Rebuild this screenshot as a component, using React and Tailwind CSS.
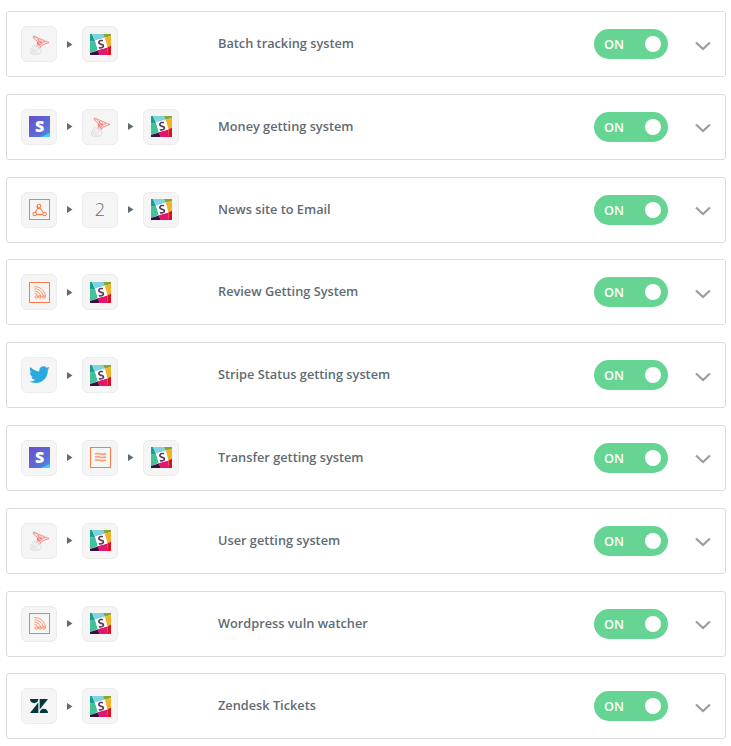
const SlackIcon = () => (
  <svg width="21" height="21" viewBox="0 0 21 21" className="blur-[0.2px]">
    <rect width="21" height="21" fill="#fff" />
    <path d="M0 0h2l3 7-5 .500z" fill="#1a9e8f" />
    <path d="M2 0h11l1.700 3.700L5 6.500z" fill="#80d4e2" />
    <path d="M13 0h8v2l-6.300 1.700z" fill="#8aa62c" />
    <path d="M14.700 3.700L21 2v9.500l-3.700 2z" fill="#efb42c" />
    <path d="M0 7.500L5 6.500l3 9.500-8 3z" fill="#43c29a" />
    <path d="M7.700 16l9.600-2.500L18 21H9.500z" fill="#e3166d" />
    <path d="M17.300 13.500l3.700-2V21h-3z" fill="#e0111f" />
    <path d="M0 19l7.900-2.500L9.500 21H0z" fill="#3b0f3f" />
    <path d="M5 6.500l9.700-2.800 2.600 9.800L7.700 16z" fill="#fff" />
    <text x="11" y="14.400" textAnchor="middle" transform="rotate(-10 11 10.500)" className="font-['Open_Sans',sans-serif] text-[12px] font-bold" fill="#5a3a5f">S</text>
  </svg>
);

const SqlIcon = () => (
  <svg width="21" height="21" viewBox="0 0 21 21" fill="none" className="blur-[0.2px]">
    <path d="M4 2.500c1.500-1 3-.5 4 1" fill="#eeeeee" stroke="#d9b5b2" strokeWidth=".7" />
    <path d="M8 3.500L20 8.500l-7 2.500-2.500 3.500-3-2c1.500-2 1.500-4 0-6C6 6 4.500 4.500 4 2.500z" fill="#fde4e1" stroke="#ef5b50" strokeWidth=".6" />
    <path d="M8 4.500l5 5.500M10 5l-2 5M13 6.500l-4 3M16 7.500l-5 1.500M9 8l2.500 5M12 10l-3 1" stroke="#ef5b50" strokeWidth=".6" />
    <path d="M4.500 11.500c2 .5 5.500 1.500 7 3.500 1.500 2.500 0 4.500-2 5-2.500.7-6 .5-7.500-.5-1.500-2 .5-6 2.500-8z" fill="#f2f2f2" stroke="#cfcfcf" strokeWidth=".6" />
    <path d="M2.500 15l6 4.500M5 13l-2.500 7M9 14l-4 6M2 18l8-3" stroke="#dcdcdc" strokeWidth=".5" />
  </svg>
);

const StripeIcon = () => (
  <svg width="21" height="21" viewBox="0 0 21 21">
    <defs>
      <linearGradient id="stripe-bg" x1="0" y1="0" x2="1" y2="1">
        <stop offset="0" stopColor="#6a4fc8" />
        <stop offset=".7" stopColor="#5b6fd8" />
        <stop offset="1" stopColor="#3fa4e8" />
      </linearGradient>
    </defs>
    <rect width="21" height="21" fill="url(#stripe-bg)" />
    <path d="M12 21L21 17v4z" fill="#3fd0f5" />
    <text x="10.500" y="15.800" textAnchor="middle" className="font-['Open_Sans',sans-serif] text-[16px] font-extrabold" fill="#fff">S</text>
  </svg>
);

const WebhookIcon = () => (
  <svg width="21" height="21" viewBox="0 0 21 21" fill="none" stroke="#ff7a45">
    <rect x=".5" y=".5" width="20" height="20" strokeWidth="1" />
    <g strokeWidth="1.100">
      <circle cx="10" cy="7" r="1.800" />
      <circle cx="5.800" cy="15" r="1.800" />
      <circle cx="15.500" cy="15" r="1.800" />
      <path d="M9 9l-3 4.500M8 15.500h5.500M11 9l3 4.500M8.500 6l-.5 3M8.500 9.500h3" />
    </g>
  </svg>
);

const RssIcon = () => (
  <svg width="21" height="21" viewBox="0 0 21 21" fill="none" stroke="#ff8a5c">
    <rect x=".5" y=".5" width="20" height="20" strokeWidth="1" stroke="#ff7a45" />
    <g strokeWidth=".9">
      <path d="M5.500 4.500c6 0 11 5 11 10.500" />
      <path d="M5.500 6.800c4.700 0 8.700 3.800 8.700 8.200" />
      <path d="M5.500 9.200c3.400 0 6.300 2.600 6.300 5.800" />
      <path d="M5.500 11.500c2 0 3.900 1.500 3.900 3.500" />
      <circle cx="7.300" cy="15" r="1.300" />
      <circle cx="11" cy="15" r="1.300" />
      <circle cx="14.800" cy="15" r="1.300" />
    </g>
  </svg>
);

const TransferIcon = () => (
  <svg width="21" height="21" viewBox="0 0 21 21" fill="none" stroke="#ff7a45">
    <rect x=".5" y=".5" width="20" height="20" strokeWidth="1" />
    <g strokeWidth="1.600" stroke="#ff9a75">
      <path d="M5 7c2-1 3.500-.5 5.500 0s3.500.5 5.500-.5" />
      <path d="M5 10.200c2-1 3.500-.5 5.500 0s3.500.5 5.500-.5" />
      <path d="M5 13.400c2-1 3.500-.5 5.500 0s3.500.5 5.500-.5" />
    </g>
  </svg>
);

const TwitterIcon = () => (
  <svg width="21" height="18" viewBox="0 0 24 20" fill="#2aa9e0">
    <path d="M24 2.400c-.9.400-1.800.700-2.800.800 1-.6 1.800-1.600 2.200-2.700-1 .6-2 1-3.100 1.200C19.300.700 18 0 16.600 0c-2.700 0-4.900 2.200-4.900 4.900 0 .4 0 .8.100 1.100C7.700 5.800 4.100 3.800 1.700.9c-.4.700-.7 1.600-.7 2.500 0 1.700.9 3.200 2.200 4.100-.8 0-1.600-.2-2.200-.6v.1c0 2.400 1.700 4.400 3.900 4.800-.4.100-.8.200-1.300.2-.3 0-.6 0-.9-.1.600 2 2.400 3.400 4.600 3.400-1.700 1.300-3.800 2.100-6.100 2.100-.4 0-.8 0-1.200-.1C2.200 18.200 4.800 19 7.500 19c9.100 0 14-7.500 14-14v-.6c1-.7 1.800-1.500 2.500-2z" />
  </svg>
);

const ZendeskIcon = () => (
  <svg width="18" height="14" viewBox="0 0 18 14" fill="#03363d">
    <path d="M0 0h8.300c0 2.300-1.900 4.200-4.150 4.200S0 2.300 0 0z" />
    <path d="M8.300 3.400V14H0z" />
    <path d="M9.700 0v10.600L18 0z" />
    <path d="M9.700 14c0-2.300 1.900-4.200 4.150-4.200S18 11.700 18 14z" />
  </svg>
);

const IconBox = ({ children }) => (
  <div className="flex h-9 w-9 shrink-0 items-center justify-center rounded-md border border-[#ececec] bg-[#f5f5f5] text-[18px] font-light text-[#5f6b73]">
    {children}
  </div>
);

const Arrow = () => (
  <div className="flex w-[25px] shrink-0 items-center justify-center">
    <svg width="6" height="7" viewBox="0 0 6 7" fill="#5f6b73">
      <path d="M0 0l5.500 3.500L0 7z" />
    </svg>
  </div>
);

const zaps = [
  { name: "Batch tracking system", icons: [<SqlIcon />, <SlackIcon />] },
  { name: "Money getting system", icons: [<StripeIcon />, <SqlIcon />, <SlackIcon />] },
  { name: "News site to Email", icons: [<WebhookIcon />, "2", <SlackIcon />] },
  { name: "Review Getting System", icons: [<RssIcon />, <SlackIcon />] },
  { name: "Stripe Status getting system", icons: [<TwitterIcon />, <SlackIcon />] },
  { name: "Transfer getting system", icons: [<StripeIcon />, <TransferIcon />, <SlackIcon />] },
  { name: "User getting system", icons: [<SqlIcon />, <SlackIcon />] },
  { name: "Wordpress vuln watcher", icons: [<RssIcon />, <SlackIcon />] },
  { name: "Zendesk Tickets", icons: [<ZendeskIcon />, <SlackIcon />] },
];

const Row = ({ name, icons }) => (
  <div className="flex h-[66px] items-center rounded-[3px] border border-[#dcdcdc] bg-white pl-[14px]">
    <div className="flex w-[197px] shrink-0 items-center">
      {icons.map((icon, i) => (
        <div key={i} className="flex items-center">
          {i > 0 && <Arrow />}
          <IconBox>{icon}</IconBox>
        </div>
      ))}
    </div>
    <div className="flex-1 pb-px text-[12.750px] font-semibold text-[#5f6b73]">{name}</div>
    <div className="flex h-[30px] w-[74px] items-center justify-between rounded-full bg-[#66d493] pl-[10px] pr-[7px]">
      <span className="mt-px text-[12.750px] font-semibold text-white">ON</span>
      <span className="h-4 w-4 rounded-full bg-white"></span>
    </div>
    <div className="mt-[3px] ml-[27px] mr-[14px] flex w-[16px] justify-center">
      <svg width="16" height="10" viewBox="0 0 16 10" fill="none" stroke="#989ea3" strokeWidth="2.200">
        <path d="M1 1.500l7 6.500 7-6.500" />
      </svg>
    </div>
  </div>
);

export default function App() {
  return (
    <div className="flex min-h-[746px] flex-col gap-[16.800px] bg-white pl-[6px] pr-[5px] pt-[11px] font-['Open_Sans',sans-serif]">
      {zaps.map((zap) => (
        <Row key={zap.name} name={zap.name} icons={zap.icons} />
      ))}
    </div>
  );
}
